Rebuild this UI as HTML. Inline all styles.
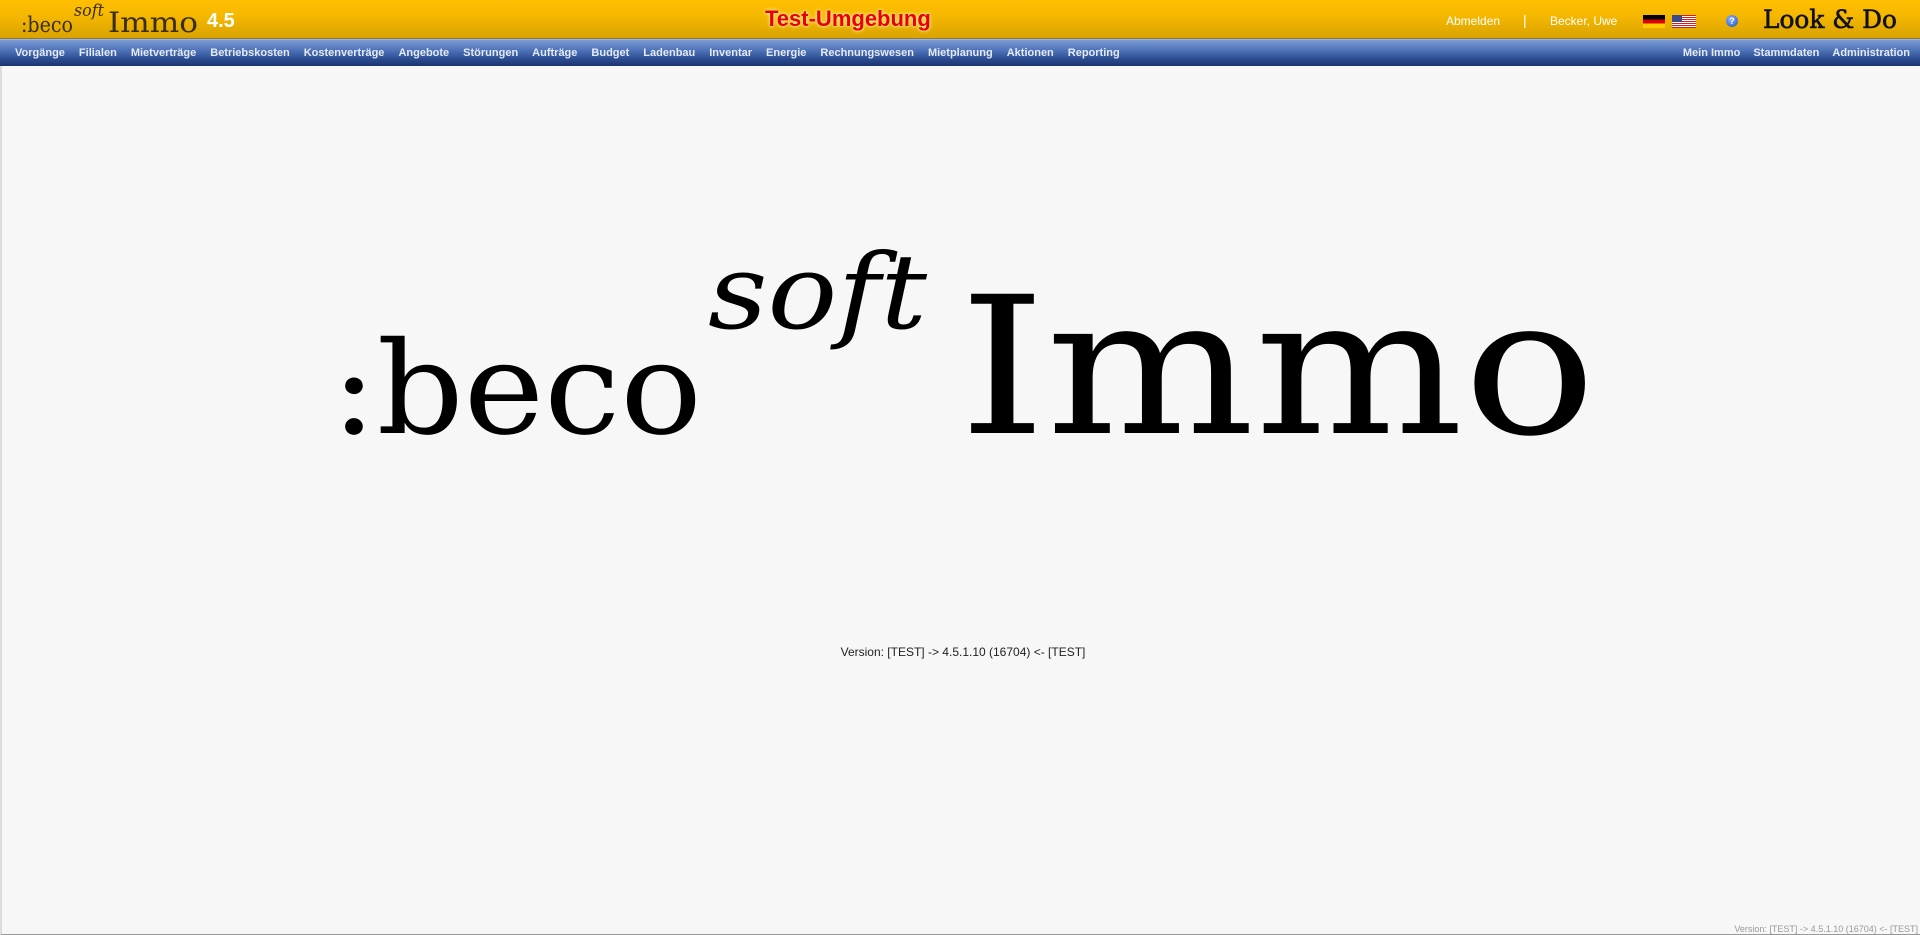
<!DOCTYPE html>
<html><head><meta charset="utf-8"><style>
*{margin:0;padding:0;box-sizing:border-box}
html,body{width:1920px;height:935px;overflow:hidden;background:#f7f7f7;font-family:"Liberation Sans",Arial,sans-serif}
#hdr{position:absolute;left:0;top:0;width:1920px;height:39px;background:linear-gradient(#ffbf00,#f6b800 40%,#d9a300);border-bottom:1px solid #8a7a3a}
#nav{position:absolute;left:0;top:39px;width:1920px;height:27px;background:linear-gradient(#7b9ad6,#4f73b8 40%,#2a4a8e 75%,#1c3470);border-top:1px solid #9fb3de}
#nav .l,#nav .r{position:absolute;top:7px;display:flex;gap:14px;font-size:11px;font-weight:bold;color:#e4ebf7;white-space:nowrap}
#nav .l{left:15px}
#nav .r{right:10px;gap:13px}
.a{position:absolute;white-space:nowrap}
#main{position:absolute;left:0;top:66px;width:1920px;height:869px;border-left:2px solid #ddd;border-bottom:1px solid #999}
</style></head><body>
<div id="hdr">
 <div class="a" style="left:207px;top:10px;font-size:20px;font-weight:bold;color:#fff">4.5</div>
 <div class="a" style="left:765px;top:6px;font-size:22px;font-weight:bold;color:#e8000a;text-shadow:0 0 4px #fff3a0,0 0 2px #fff3a0">Test-Umgebung</div>
 <div class="a" style="left:1446px;top:14px;font-size:12px;color:#fff">Abmelden</div>
 <div class="a" style="left:1523px;top:12px;font-size:14px;color:#fff">|</div>
 <div class="a" style="left:1550px;top:14px;font-size:12px;color:#fff">Becker, Uwe</div>
 <div class="a" style="left:1643px;top:15px;width:22px;height:13px;background:linear-gradient(#000 33%,#d00 33%,#d00 66%,#fc0 66%)"></div>
 <div class="a" style="left:1672px;top:15px;width:24px;height:13px;background:repeating-linear-gradient(#c22 0 1px,#fff 1px 2px)"><div style="width:10px;height:7px;background:#3c4a8a"></div></div>
 <div class="a" style="left:1726px;top:15px;width:12px;height:12px;border-radius:50%;background:radial-gradient(circle at 40% 35%,#8ab4ff,#1a4fc0);color:#fff;font-size:9px;font-weight:bold;text-align:center;line-height:12px">?</div>
</div>
<div id="nav">
 <div class="l"><span>Vorgänge</span><span>Filialen</span><span>Mietverträge</span><span>Betriebskosten</span><span>Kostenverträge</span><span>Angebote</span><span>Störungen</span><span>Aufträge</span><span>Budget</span><span>Ladenbau</span><span>Inventar</span><span>Energie</span><span>Rechnungswesen</span><span>Mietplanung</span><span>Aktionen</span><span>Reporting</span></div>
 <div class="r"><span>Mein Immo</span><span>Stammdaten</span><span>Administration</span></div>
</div>
<div id="main"></div>
<svg class="a" style="left:0;top:0" width="1920" height="935">
 <g font-family="DejaVu Serif, Liberation Serif, serif" fill="#3a2e10">
  <text x="21" y="32" font-size="21" textLength="52" lengthAdjust="spacingAndGlyphs">:beco</text>
  <text x="74" y="16" font-size="17" font-style="italic" textLength="30" lengthAdjust="spacingAndGlyphs">soft</text>
  <text x="108" y="32" font-size="28" textLength="90" lengthAdjust="spacingAndGlyphs">Immo</text>
 </g>
 <text x="1763" y="28" font-family="DejaVu Serif, Liberation Serif, serif" font-size="25" stroke="#111" stroke-width="0.6" textLength="134" lengthAdjust="spacingAndGlyphs" fill="#111">Look &amp; Do</text>
 <g font-family="DejaVu Serif, Liberation Serif, serif" fill="#000">
  <text x="331" y="433" font-size="128" textLength="371" lengthAdjust="spacingAndGlyphs">:beco</text>
  <text x="708" y="328" font-style="italic" font-size="104" textLength="219" lengthAdjust="spacingAndGlyphs">soft</text>
  <text x="959" y="433" font-size="191" textLength="637" lengthAdjust="spacingAndGlyphs">Immo</text>
 </g>
</svg>
<div class="a" style="left:0;width:1926px;top:645px;text-align:center;font-size:12px;color:#222">Version: [TEST] -&gt; 4.5.1.10 (16704) &lt;- [TEST]</div>
<div class="a" style="right:2px;top:924px;font-size:9px;color:#999">Version: [TEST] -&gt; 4.5.1.10 (16704) &lt;- [TEST]</div>
</body></html>
